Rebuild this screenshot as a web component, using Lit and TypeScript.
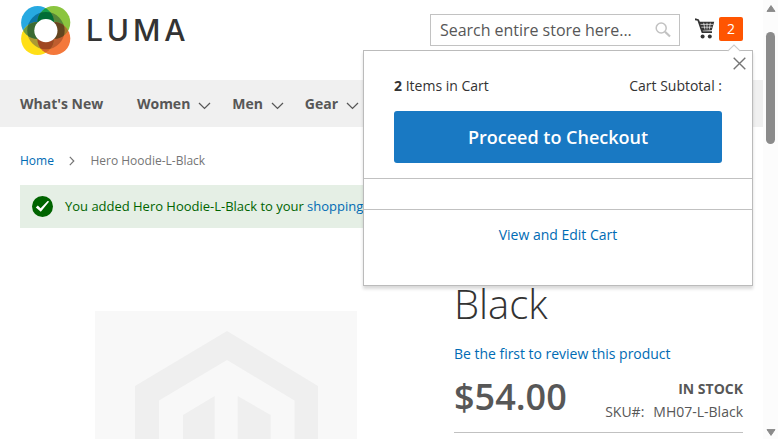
import { LitElement, html, css, svg } from "lit";
import { customElement } from "lit/decorators.js";

const chevron = html`<svg class="chev" width="13" height="8" viewBox="0 0 13 8"><path d="M1 1 6.5 6.4 12 1" fill="none" stroke="#575757" stroke-width="1.3"/></svg>`;

const petals: [string, number, number][] = [
  ["#27a9e1", 37.6, 22.6],
  ["#8bc53f", 53.8, 22.6],
  ["#f4783b", 53.8, 38.6],
  ["#ffdf17", 37.6, 38.6],
];
const inner = ["#0c75a3", "#578739", "#bf5d2f", "#ab9a33"];
const tips = ["#159c49", "#a57a2c", "#d8662c", "#6f9a3a"];
const lenses = ["#006d36", "#63451f", "#a04722", "#3a6b32"];

const lens = (fills: string[]) => petals.map((_, i) => {
  const [, x, y] = petals[(i + 1) % 4];
  return svg`<g clip-path=${`url(#petal${i})`}><circle cx=${x} cy=${y} r="16.5" fill=${fills[i]}/></g>`;
});

const logo = html`<svg width="52" height="56" viewBox="20 0 52 56">
  <defs>${petals.map(([, x, y], i) => svg`<clipPath id=${"petal" + i}><circle cx=${x} cy=${y} r="16.5"/></clipPath>`)}
    <clipPath id="core"><circle cx="45.9" cy="30.6" r="18.7"/></clipPath></defs>
  ${petals.map(([c, x, y]) => svg`<circle cx=${x} cy=${y} r="16.5" fill=${c}/>`)}
  ${lens(tips)}
  <g clip-path="url(#core)">
    ${petals.map(([, x, y], i) => svg`<circle cx=${x} cy=${y} r="16.5" fill=${inner[i]}/>`)}
    ${lens(lenses)}
  </g>
  <circle cx="45.9" cy="30.6" r="11.6" fill="#fff"/>
</svg>`;

const cart = html`<svg width="20" height="22" viewBox="0 0 20 22">
  <path d="M0 2.2 3.2 3 7.4 15.2H17" fill="none" stroke="#333" stroke-width="1.8" stroke-linejoin="round"/>
  <path d="M3.8 4.8H19.2L16.8 13.2 6.8 13.8Z" fill="#333"/>
  <path d="M5.5 7.4H18M6.3 10.2H17.2M8.7 5.8 9.9 12.6M12 5.8V12.6M15.3 5.8 14.3 12.6" stroke="#fff" stroke-width=".65"/>
  <circle cx="7.6" cy="19.4" r="2" fill="#333"/><circle cx="14.8" cy="19.4" r="2" fill="#333"/>
</svg>`;

@customElement("app-root")
export class AppRoot extends LitElement {
  static styles = css`
    :host { display: flex; width: 778px; height: 439px; overflow: hidden; background: #fff; font: 14px/20px "Open Sans", "Noto Sans", sans-serif; color: #333; }
    * { box-sizing: border-box; }
    a { color: #006bb4; text-decoration: none; }
    svg { display: block; flex: none; }
    .page { width: 763px; height: 439px; position: relative; overflow: hidden; }
    .header { height: 80px; display: flex; padding: 0 20px; }
    .logo { display: flex; align-items: flex-start; }
    .brand { font: 500 30px/35px Inter, "Open Sans", sans-serif; letter-spacing: 3.9px; margin: 13px 0 0 14px; }
    .search { margin: 14px 15px 0 auto; width: 250px; height: 32px; border: 1px solid #c2c2c2; display: flex; align-items: center; justify-content: space-between; padding: 0 8px 0 9px; font-size: 16px; letter-spacing: -.03px; color: #575757; }
    .cart { display: flex; margin-top: 17px; }
    .count { width: 24px; height: 24px; border-radius: 2px; background: #ff5501; color: #fff; line-height: 24px; text-align: center; margin-left: 4px; }
    .nav { height: 47px; background: #f0f0f0; padding-left: 20px; display: flex; align-items: center; gap: 21.3px; font-weight: 700; color: #575757; }
    .nav span { display: flex; align-items: center; }
    .nav span:first-child { margin-right: 12.4px; }
    .chev { margin: 4px 0 0 7.6px; }
    .crumbs { height: 58px; padding: 24px 20px 0; display: flex; font-size: 12px; }
    .crumbs svg { margin: 5px 15.5px 0 15px; }
    .crumbs span { color: #757575; }
    .message { margin: 0 20px; height: 43px; background: #e5efe5; color: #006400; display: flex; align-items: center; padding-left: 12px; font-size: 13px; }
    .message p { margin: 0 0 1px 12px; white-space: nowrap; letter-spacing: -.015px; }
    .main { display: flex; height: 211px; }
    .photo { margin: 83px 0 0 95px; width: 262px; height: 128px; background: #f8f8f8; }
    .info { margin-left: 97px; width: 289px; padding-top: 54px; }
    h1 { font-size: 40px; line-height: 44px; font-weight: 300; margin: 0; }
    .review { margin-top: 18px; display: block; letter-spacing: -.025px; }
    .row { display: flex; justify-content: space-between; height: 69px; border-bottom: 1px solid #c1c1c1; color: #575757; }
    .price { font-size: 36px; line-height: 36px; font-weight: 600; margin-top: 15px; }
    .stock { text-align: right; padding-top: 15px; }
    .stock b { display: block; }
    .stock p { margin: 3px 0 0; }
    .stock span { margin-left: 9px; }
    .popup { position: absolute; left: 363px; top: 50px; width: 390px; height: 236px; background: #fff; border: 1px solid #bbb; box-shadow: 0 3px 3px rgba(0,0,0,.15); }
    .tip { position: absolute; left: 363px; top: -7px; }
    .close { position: absolute; left: 369px; top: 6px; }
    .summary { display: flex; justify-content: space-between; padding: 25px 30px 0; height: 60px; }
    .checkout { margin: 0 30px 15px; height: 52px; border-radius: 3px; background: #1979c3; color: #fff; font-size: 18px; font-weight: 600; line-height: 52px; text-align: center; }
    .items { height: 32px; border: solid #c1c1c1; border-width: 1px 0; }
    .view { display: block; text-align: center; margin-top: 15px; }
    .scroll { width: 15px; background: #fcfcfc; display: flex; flex-direction: column; align-items: center; padding: 5px 0 3px; }
    .thumb { width: 9px; height: 112px; margin: 20px 0 auto; border-radius: 5px; background: #8b8b8b; }
  `;

  render() {
    return html`
      <div class="page">
        <div class="header">
          <div class="logo">${logo}<div class="brand">LUMA</div></div>
          <div class="search">Search entire store here...
            <svg width="16" height="16" viewBox="0 0 16 16" fill="none" stroke="#c2c2c2"><circle cx="6.2" cy="6" r="5" stroke-width="1.5"/><path d="m10 9.8 5 4.7" stroke-width="2.2"/></svg>
          </div>
          <div class="cart">${cart}<div class="count">2</div></div>
        </div>
        <div class="nav">
          <span>What's New</span>
          ${["Women", "Men", "Gear"].map((n) => html`<span>${n}${chevron}</span>`)}
        </div>
        <div class="crumbs"><a>Home</a><svg width="6" height="10" viewBox="0 0 6 10"><path d="m.8 .8 4 4.2-4 4.2" fill="none" stroke="#757575" stroke-width="1.2"/></svg><span>Hero Hoodie-L-Black</span></div>
        <div class="message">
          <svg width="21" height="21" viewBox="0 0 21 21"><circle cx="10.5" cy="10.5" r="10.5" fill="#006400"/><path d="M3.8 11.4 5.8 9.6 8.6 12.2 15.6 5 17.2 5.6 8.8 15.8Z" fill="#fff"/></svg>
          <p>You added Hero Hoodie-L-Black to your <a>shopping cart</a>.</p>
        </div>
        <div class="main">
          <div class="photo">
            <svg width="262" height="128" viewBox="0 0 262 128" fill="#efefef">
              <path d="M40 128V75L132 20 223 75V128H199.5V89.5L132 49 64 89.5V128Z"/>
              <path d="M88 128V104L119.7 85V128ZM142.7 128V85L175.7 104V128Z"/>
            </svg>
          </div>
          <div class="info"><h1>Black</h1><a class="review">Be the first to review this product</a>
            <div class="row"><div class="price">$54.00</div><div class="stock"><b>IN STOCK</b><p>SKU#:<span>MH07-L-Black</span></p></div></div>
          </div>
        </div>
        <div class="popup">
          <svg class="tip" width="14" height="8" viewBox="0 0 14 8"><path d="M.7 7.5 7 1.2 13.3 7.5V8H.7Z" fill="#fff"/><path d="M.7 7.2 7 1 13.3 7.2" fill="none" stroke="#ccc" stroke-width="1.1"/></svg>
          <svg class="close" width="13" height="13" viewBox="0 0 13 13"><path d="M.7 .7 12.3 12.3M12.3 .7 .7 12.3" stroke="#757575" stroke-width="1.4"/></svg>
          <div class="summary"><span><b>2</b> Items in Cart</span><span>Cart Subtotal :</span></div>
          <div class="checkout">Proceed to Checkout</div><div class="items"></div><a class="view">View and Edit Cart</a>
        </div>
      </div>
      <div class="scroll">
        <svg width="10" height="7" viewBox="0 0 10 7"><path d="M5 .6 9 6.4H1Z" fill="#8b8b8b" stroke="#8b8b8b" stroke-linejoin="round"/></svg>
        <div class="thumb"></div>
        <svg width="10" height="7" viewBox="0 0 10 7"><path d="M5 6.4 9 .6H1Z" fill="#8b8b8b" stroke="#8b8b8b" stroke-linejoin="round"/></svg>
      </div>`;
  }
}
